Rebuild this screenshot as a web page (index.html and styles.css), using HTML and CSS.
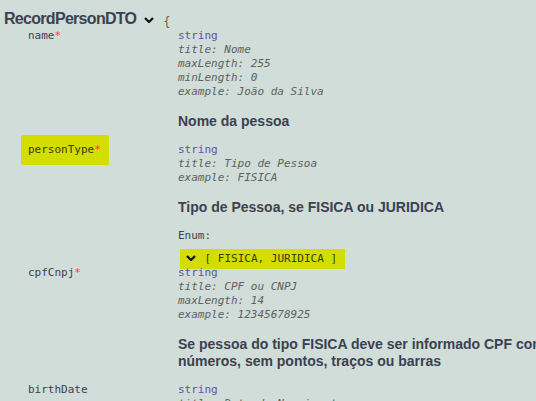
FILE: index.html
```html
<!DOCTYPE html>
<html lang="pt">
<head>
<meta charset="utf-8">
<title>RecordPersonDTO</title>
<link rel="stylesheet" href="styles.css">
</head>
<body>
<div class="model">
  <div class="model-title">
    <span class="title-text">RecordPersonDTO</span>
    <svg class="chev" width="10" height="6" viewBox="0 0 10 6"><polyline points="1,1 5,5 9,1" fill="none" stroke="#111" stroke-width="2.2"/></svg>
    <span class="brace">{</span>
  </div>

  <div class="prop">
    <div class="key">name<span class="req">*</span></div>
    <div class="val">
      <div class="type">string</div>
      <div class="attr">title: Nome</div>
      <div class="attr">maxLength: 255</div>
      <div class="attr">minLength: 0</div>
      <div class="attr">example: João da Silva</div>
      <p class="desc">Nome da pessoa</p>
    </div>
  </div>

  <div class="prop">
    <div class="key"><span class="hl hl-key">personType<span class="req">*</span></span></div>
    <div class="val">
      <div class="type">string</div>
      <div class="attr">title: Tipo de Pessoa</div>
      <div class="attr">example: FISICA</div>
      <p class="desc">Tipo de Pessoa, se FISICA ou JURIDICA</p>
      <div class="enum-label">Enum:</div>
      <div class="enum-values"><span class="hl hl-enum"><svg class="chev-enum" width="10" height="6" viewBox="0 0 10 6"><polyline points="1,1 5,5 9,1" fill="none" stroke="#111" stroke-width="2.2"/></svg> [ FISICA, JURIDICA ]</span></div>
    </div>
  </div>

  <div class="prop">
    <div class="key">cpfCnpj<span class="req">*</span></div>
    <div class="val">
      <div class="type">string</div>
      <div class="attr">title: CPF ou CNPJ</div>
      <div class="attr">maxLength: 14</div>
      <div class="attr">example: 12345678925</div>
      <p class="desc nowrap">Se pessoa do tipo FISICA deve ser informado CPF com 11<br>números, sem pontos, traços ou barras</p>
    </div>
  </div>

  <div class="prop">
    <div class="key">birthDate</div>
    <div class="val">
      <div class="type">string</div>
      <div class="attr">title: Data de Nascimento</div>
    </div>
  </div>
</div>
</body>
</html>
```
FILE: styles.css
```css
html, body {
  margin: 0;
  padding: 0;
  background: #d1ddd8;
  overflow: hidden;
}
body {
  width: 536px;
  height: 401px;
  color: #3b4151;
  font-family: "DejaVu Sans Mono", monospace;
  font-size: 11px;
}
.model {
  padding-top: 9px;
}
.model-title {
  display: flex;
  align-items: center;
  height: 20px;
  padding-left: 4px;
}
.title-text {
  font-family: "Liberation Sans", Arial, sans-serif;
  font-size: 16px;
  font-weight: bold;
  letter-spacing: -0.7px;
  line-height: 20px;
}
.chev {
  margin-left: 8px;
  margin-top: 1px;
}
.brace {
  margin-left: 9px;
  margin-top: 5px;
  font-size: 12px;
  color: #7d5b3a;
}
.prop {
  display: grid;
  grid-template-columns: 178px 1fr;
}
.key {
  padding-left: 28px;
  line-height: 14px;
  white-space: nowrap;
}
.val {
  line-height: 14px;
  white-space: nowrap;
}
.req {
  color: #f93e3e;
}
.type {
  color: #55a;
}
.attr {
  color: #606060;
  font-style: italic;
}
.desc {
  margin: 14px 0 13px;
  font-family: "Liberation Sans", Arial, sans-serif;
  font-size: 14px;
  font-weight: bold;
  line-height: 17px;
  color: #3b4151;
  white-space: nowrap;
}
.enum-label {
  color: #3b4151;
}
.enum-values {
  margin-top: 9px;
  padding-left: 8px;
}
.hl {
  background: #d4dd00;
  color: #3b3a10;
}
.hl-key {
  display: inline-block;
  padding: 8px 8px 8px 7px;
  margin: -8px -8px -8px -7px;
  border-radius: 2px;
}
.hl-enum {
  display: inline-block;
  padding: 3px 8px 3px 6px;
  margin: -3px 0 -3px -6px;
  line-height: 14px;
}
.chev-enum {
  margin-right: 2px;
  vertical-align: 1px;
}
```
